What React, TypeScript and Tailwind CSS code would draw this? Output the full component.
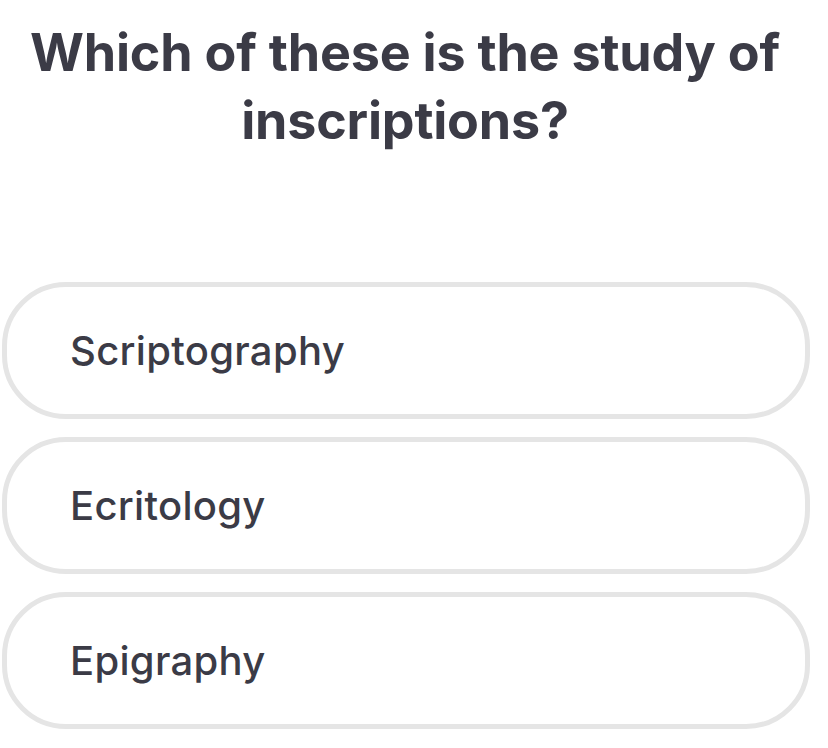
const OPTIONS = ['Scriptography', 'Ecritology', 'Epigraphy']

export default function App() {
  return (
    <div className="min-h-[748px] w-[828px] bg-white font-['Inter',sans-serif] text-[#3b3b46]">
      <div className="w-[810px]">
        <h1 className="pt-[19px] text-center text-[52px] font-bold leading-[68px] tracking-[-0.2px]">
          Which of these is the study of
          <br />
          inscriptions?
        </h1>

        <div className="mt-[127px] ml-[2px] flex flex-col gap-[18px]">
          {OPTIONS.map((label) => (
            <button
              key={label}
              type="button"
              className="flex h-[137px] w-[808px] items-center rounded-[64px] border-[5px] border-[#e5e5e5] bg-white pl-[63px] text-left text-[40px] font-medium tracking-[0.3px]"
            >
              {label}
            </button>
          ))}
        </div>
      </div>
    </div>
  )
}
